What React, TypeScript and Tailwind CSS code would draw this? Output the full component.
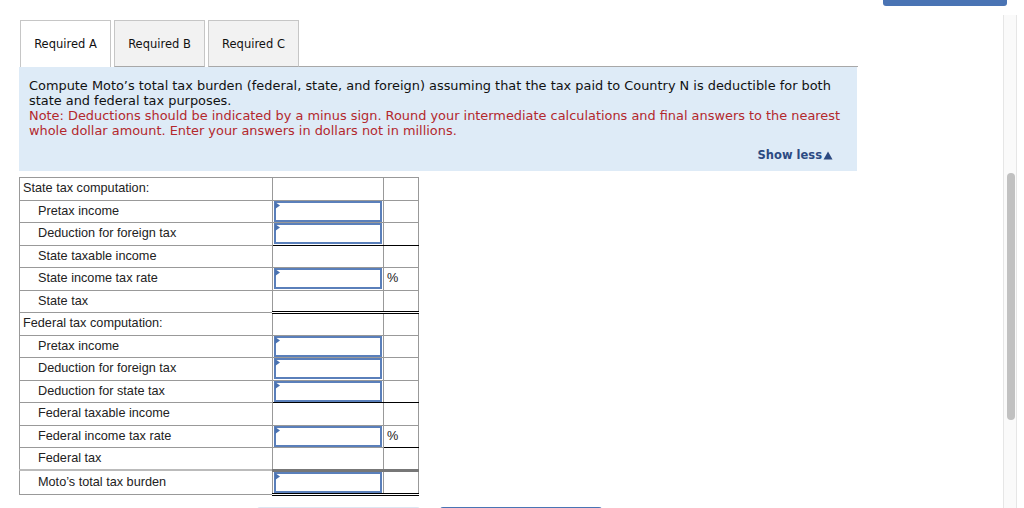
import React from "react";

type Row = {
  label: string;
  head?: boolean;
  input?: boolean;
  unit?: string;
  bottom?: "black" | "unitBlack" | "double" | "thickGray";
};

const rows: Row[] = [
  { label: "State tax computation:", head: true },
  { label: "Pretax income", input: true },
  { label: "Deduction for foreign tax", input: true, bottom: "black" },
  { label: "State taxable income" },
  { label: "State income tax rate", input: true, unit: "%", bottom: "unitBlack" },
  { label: "State tax", bottom: "double" },
  { label: "Federal tax computation:", head: true },
  { label: "Pretax income", input: true },
  { label: "Deduction for foreign tax", input: true },
  { label: "Deduction for state tax", input: true, bottom: "black" },
  { label: "Federal taxable income" },
  { label: "Federal income tax rate", input: true, unit: "%", bottom: "unitBlack" },
  { label: "Federal tax", bottom: "thickGray" },
  { label: "Moto’s total tax burden", input: true, bottom: "double" },
];

function inputBottom(b?: Row["bottom"]) {
  if (b === "black") return "border-b-black";
  if (b === "double") return "border-b-[3px] border-b-black border-double";
  if (b === "thickGray") return "border-b-[3px] border-b-[#777]";
  return "border-b-[#999]";
}

function unitBottom(b?: Row["bottom"]) {
  if (b === "black" || b === "unitBlack") return "border-b-black";
  if (b === "double") return "border-b-[3px] border-b-black border-double";
  if (b === "thickGray") return "border-b-[3px] border-b-[#777]";
  return "border-b-[#999]";
}

function AnswerBox() {
  return (
    <div className="relative h-[21px] w-full border-2 border-[#5a7fba] bg-white">
      <svg className="absolute left-[-1px] top-[-1px]" width="6" height="7" viewBox="0 0 6 7">
        <polygon points="0,0 5,3.5 0,7" fill="#4a72b0" />
      </svg>
    </div>
  );
}

export default function App() {
  return (
    <div className="relative h-[508px] w-[1024px] overflow-hidden bg-white">
      {/* top-right clipped button */}
      <div className="absolute left-[883px] top-[-10px] h-[16px] w-[124px] rounded-b-[3px] bg-[#4a74b4]" />

      {/* scrollbar */}
      <div className="absolute left-[1003px] top-[15px] h-[493px] w-[14px] border-x border-[#e6e6e6] bg-[#fafafa]">
        <div className="absolute left-[3px] top-[158px] h-[247px] w-[8px] rounded-full bg-[#c1c1c1]" />
      </div>

      <div className="pl-[19px] pt-[20px]">
        {/* tabs */}
        <div className="flex w-[839px] items-end" style={{ fontFamily: '"DejaVu Sans", Verdana, sans-serif' }}>
          <div className="ml-[1px] flex h-[47px] w-[91px] items-center justify-center border border-b-0 border-[#c6c6c6] bg-white pt-[2px] text-[11.5px] text-[#111]">
            Required A
          </div>
          <div className="ml-[3px] flex h-[47px] w-[91px] items-center justify-center border border-[#c6c6c6] border-b-[#a8a8a8] bg-[#f2f2f2] pt-[2px] text-[11.5px] text-[#111]">
            Required B
          </div>
          <div className="ml-[3px] flex h-[47px] w-[91px] items-center justify-center border border-[#c6c6c6] border-b-[#a8a8a8] bg-[#f2f2f2] pt-[2px] text-[11.5px] text-[#111]">
            Required C
          </div>
          <div className="h-px flex-1 bg-[#a8a8a8]" />
        </div>

        {/* instructions panel */}
        <div
          className="w-[838px] bg-[#deebf7] px-[10px] pb-[8px] pt-[11px] text-[12.9px] leading-[15px]"
          style={{ fontFamily: '"DejaVu Sans", Verdana, sans-serif' }}
        >
          <p className="text-[#111]">
            <span className="block whitespace-nowrap">
              Compute Moto’s total tax burden (federal, state, and foreign) assuming that the tax paid to Country N is deductible for both
            </span>
            <span className="block whitespace-nowrap">state and federal tax purposes.</span>
          </p>
          <p className="text-[#b3282d]">
            <span className="block whitespace-nowrap">
              Note: Deductions should be indicated by a minus sign. Round your intermediate calculations and final answers to the nearest
            </span>
            <span className="block whitespace-nowrap">whole dollar amount. Enter your answers in dollars not in millions.</span>
          </p>
          <div className="mt-[10px] flex items-center justify-end pr-[14px] text-[11.5px] font-bold text-[#2c4a82]">
            Show less
            <svg className="ml-[1px]" width="10" height="9" viewBox="0 0 10 9">
              <polygon points="5,0.5 9.5,8.5 0.5,8.5" fill="#2c4a82" />
            </svg>
          </div>
        </div>

        {/* table */}
        <table
          className="mt-[6px] w-[400px] border-collapse text-[12.7px] text-[#222]"
          style={{ fontFamily: '"Liberation Sans", Arial, sans-serif' }}
        >
          <colgroup>
            <col className="w-[254px]" />
            <col className="w-[111px]" />
            <col className="w-[35px]" />
          </colgroup>
          <tbody>
            {rows.map((r, i) => (
              <tr key={i} className="h-[22.5px]">
                <td
                  className={`border border-[#999] p-0 ${r.head ? "pl-[3px]" : "pl-[18px]"} ${
                    r.bottom === "thickGray" ? "border-b-[2px] border-b-[#bbb]" : ""
                  }`}
                >
                  {r.label}
                </td>
                <td className={`border border-[#999] p-0 px-[1px] ${inputBottom(r.bottom)}`}>
                  {r.input ? <AnswerBox /> : null}
                </td>
                <td className={`border border-[#999] p-0 pl-[3px] ${unitBottom(r.bottom)}`}>{r.unit ?? ""}</td>
              </tr>
            ))}
          </tbody>
        </table>

        {/* bottom buttons (clipped) */}
        <div className="mt-[11px] flex gap-[20px] pl-[238px]">
          <div className="h-[20px] w-[163px] rounded-[3px] bg-[#dce6f2]" />
          <div className="h-[20px] w-[162px] rounded-[3px] bg-[#4a74b4]" />
        </div>
      </div>
    </div>
  );
}
